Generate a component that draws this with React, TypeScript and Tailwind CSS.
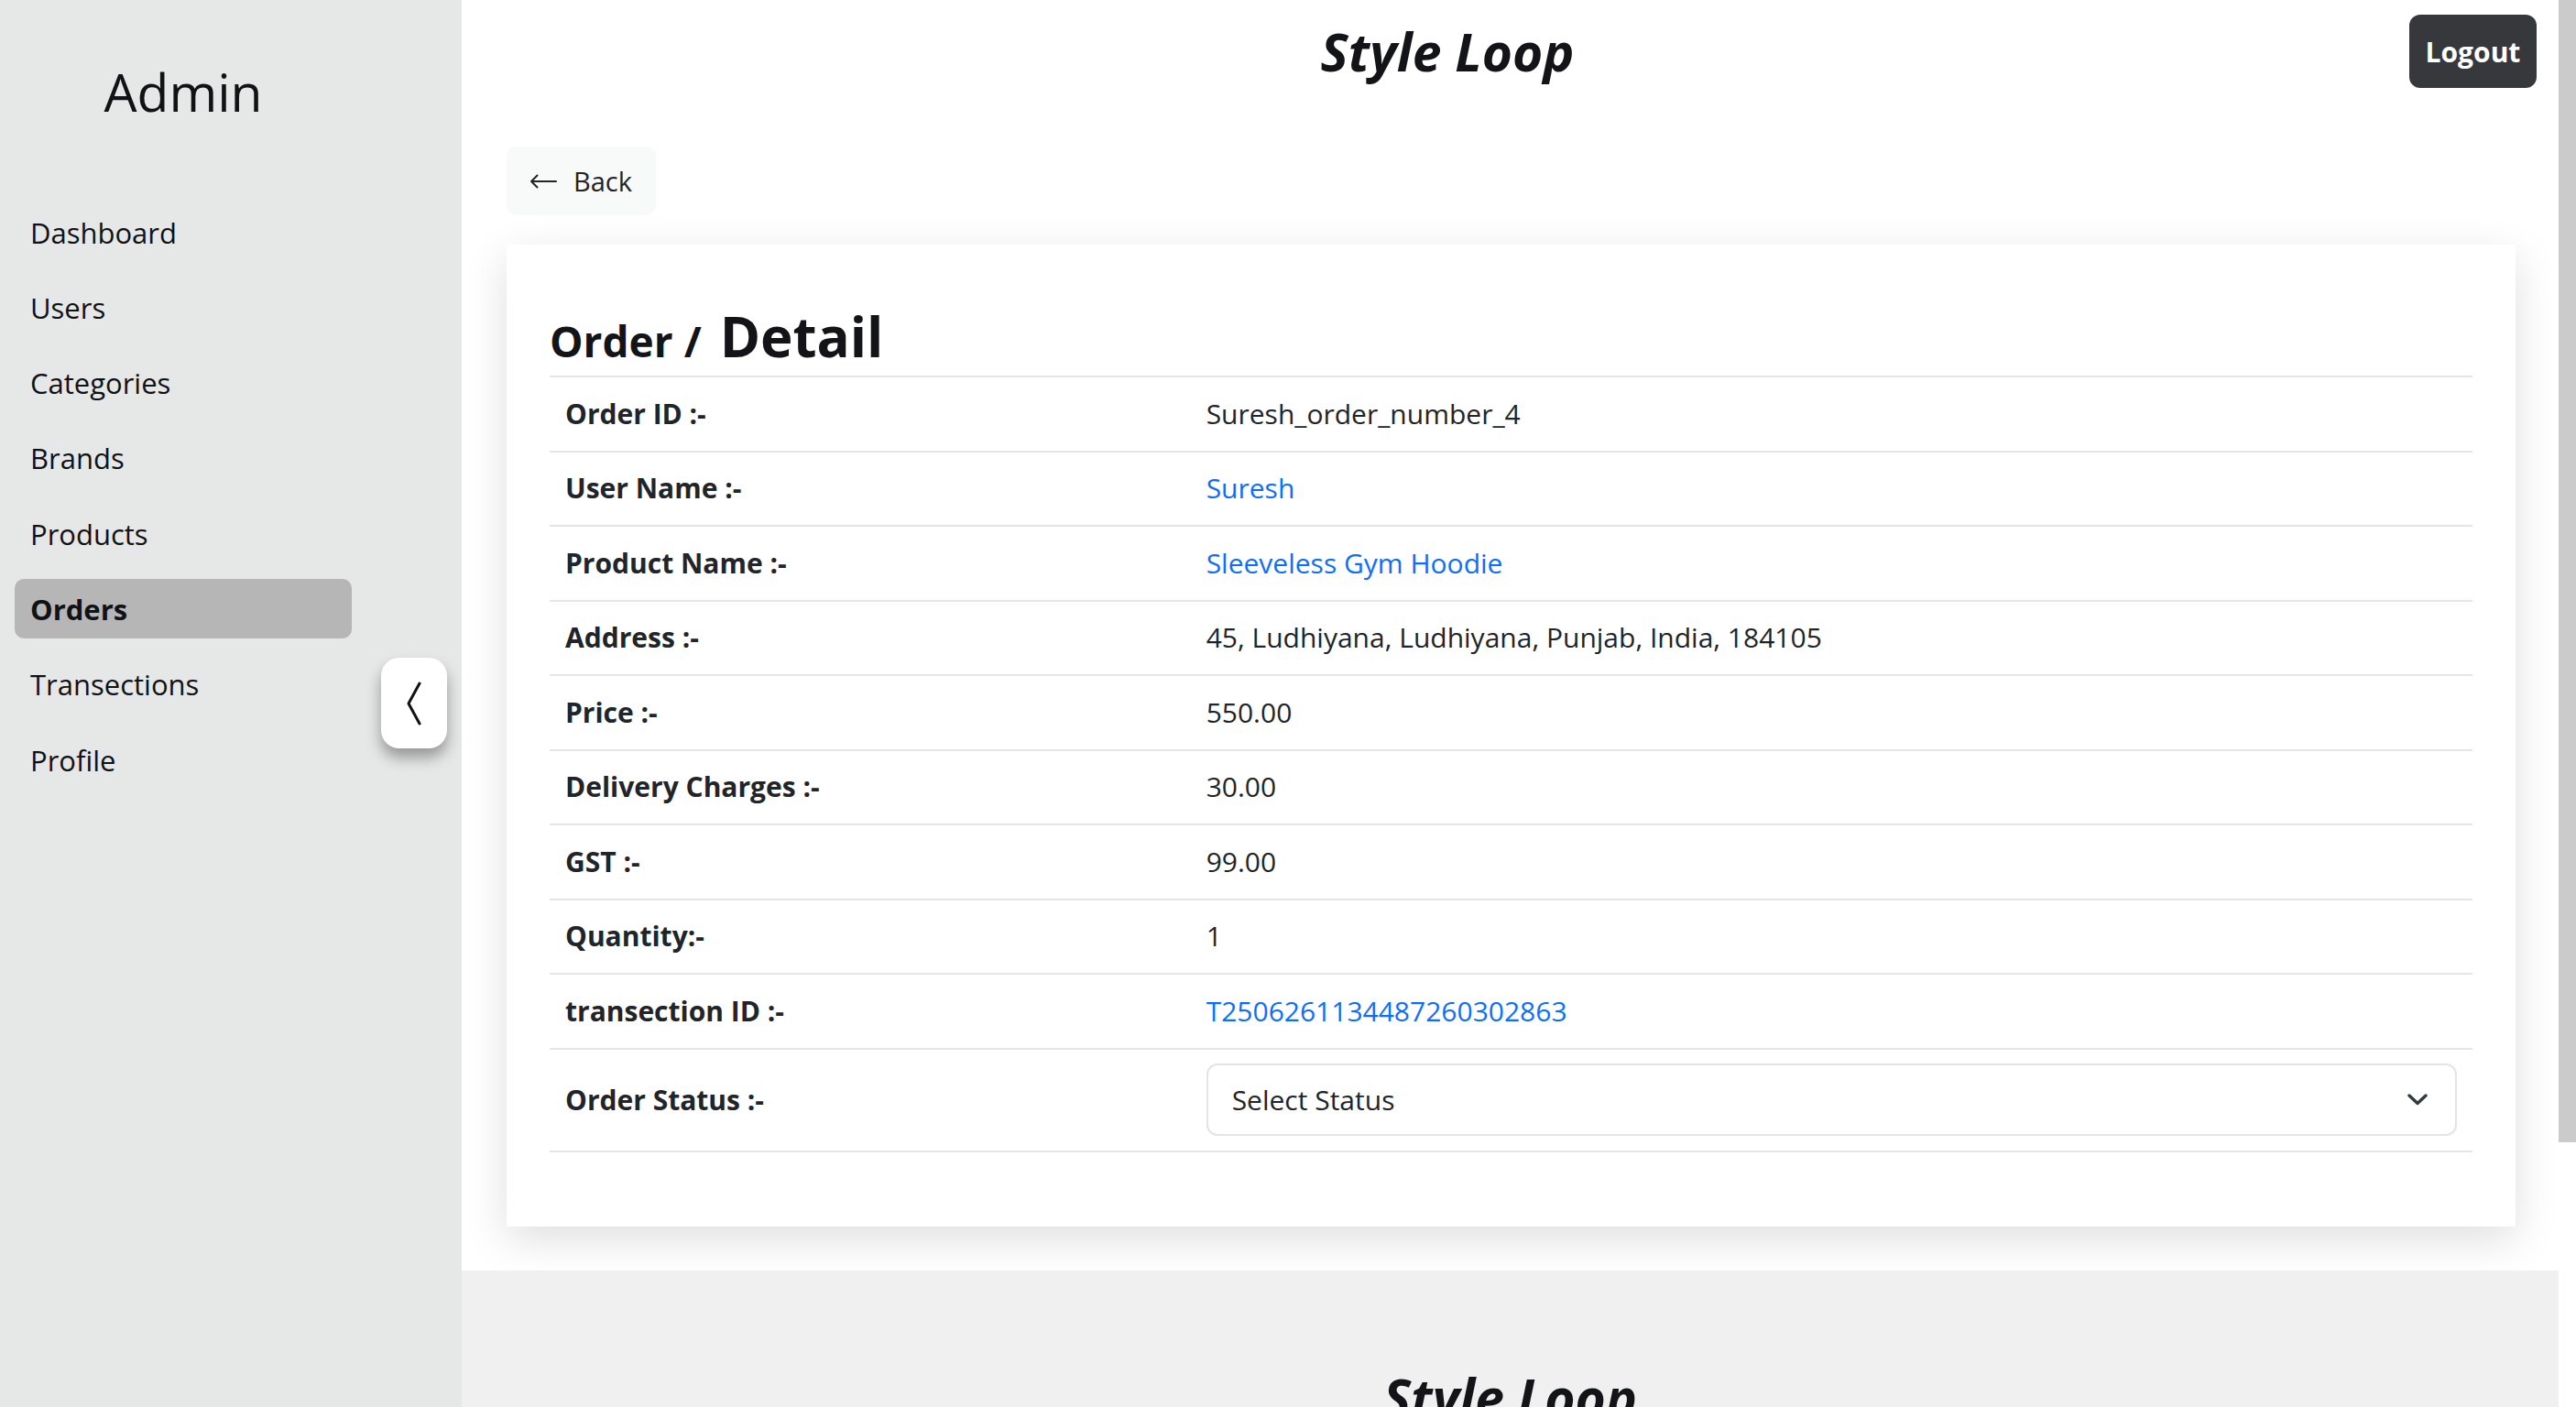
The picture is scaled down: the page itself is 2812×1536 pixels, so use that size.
import { useState } from 'react'

interface DetailRow {
  label: string
  value: string
  link?: boolean
}

const rows: DetailRow[] = [
  { label: 'Order ID :-', value: 'Suresh_order_number_4' },
  { label: 'User Name :-', value: 'Suresh', link: true },
  { label: 'Product Name :-', value: 'Sleeveless Gym Hoodie', link: true },
  { label: 'Address :-', value: '45, Ludhiyana, Ludhiyana, Punjab, India, 184105' },
  { label: 'Price :-', value: '550.00' },
  { label: 'Delivery Charges :-', value: '30.00' },
  { label: 'GST :-', value: '99.00' },
  { label: 'Quantity:-', value: '1' },
  { label: 'transection ID :-', value: 'T2506261134487260302863', link: true },
]

const navItems = ['Dashboard', 'Users', 'Categories', 'Brands', 'Products', 'Orders', 'Transections', 'Profile']

function Sidebar() {
  const active = 'Orders'
  return (
    <aside className="relative w-[504px] shrink-0 bg-[#e6e7e7] px-[16px] pt-[66px]">
      <div className="w-[368px] text-center text-[57px] leading-[68px] text-[#111216]">Admin</div>
      <nav className="mt-[87px] flex w-[368px] flex-col gap-[17.3px]">
        {navItems.map(item => (
          <a
            key={item}
            className={`flex h-[65px] items-center rounded-[10px] pl-[17px] text-[31px] leading-[40px] text-[#111216] ${
              item === active ? 'bg-[#b6b6b6] font-bold' : ''
            }`}
          >
            {item}
          </a>
        ))}
      </nav>
      {/* collapse toggle */}
      <button className="absolute left-[416px] top-[718px] flex h-[99px] w-[72px] items-center justify-center rounded-[20px] bg-white shadow-[0_10px_16px_rgba(0,0,0,0.35)]">
        <svg width="16" height="48" viewBox="0 0 16 48" fill="none">
          <polyline points="14,2 2,24 14,46" stroke="#111216" strokeWidth="3" strokeLinecap="round" strokeLinejoin="round" />
        </svg>
      </button>
    </aside>
  )
}

function StatusSelect() {
  const [status, setStatus] = useState('')
  return (
    <div className="relative h-[79px] w-full">
      <select
        value={status}
        onChange={e => setStatus(e.target.value)}
        className="h-full w-full appearance-none rounded-[12px] border-2 border-[#e2e4e6] bg-white pl-[26px] text-[30px] text-[#212529] outline-none"
      >
        <option value="">Select Status</option>
        <option value="pending">Pending</option>
        <option value="shipped">Shipped</option>
        <option value="delivered">Delivered</option>
      </select>
      <svg className="pointer-events-none absolute right-[32px] top-[33px]" width="22" height="13" viewBox="0 0 22 13" fill="none">
        <polyline points="2,2 11,10.5 20,2" stroke="#343a40" strokeWidth="3.4" strokeLinecap="round" strokeLinejoin="round" />
      </svg>
    </div>
  )
}

export default function App() {
  return (
    <div className="flex h-[1536px] w-full overflow-hidden bg-white font-['Open_Sans',sans-serif] text-[#212529]">
      <Sidebar />

      <main className="flex min-w-0 flex-1 flex-col">
        <header className="flex items-start pl-[26px] pr-[24px] pt-[16px]">
          <div className="flex-1 pt-[6px] text-center text-[57px] font-bold italic leading-[68px] text-[#131418]">Style Loop</div>
          <button className="flex h-[80px] w-[139px] items-center justify-center rounded-[12px] bg-[#37383b] text-[30px] font-bold text-white">
            Logout
          </button>
        </header>

        <section className="pb-[48px] pl-[49px] pr-[47px] pt-[64px]">
          <button className="flex h-[75px] items-center gap-[18px] rounded-[10px] bg-[#f8f9f9] pl-[25px] pr-[26px] text-[29px] text-[#212529]">
            <svg width="30" height="16" viewBox="0 0 30 16" fill="none">
              <path d="M29 8H2M8.5 1.5L2 8l6.5 6.5" stroke="#212529" strokeWidth="2" strokeLinecap="round" strokeLinejoin="round" />
            </svg>
            Back
          </button>

          <div className="mt-[32px] bg-white px-[47px] pb-[81px] pt-[66px] shadow-[0_14px_44px_rgba(0,0,0,0.13)]">
            <h2 className="mb-[4px] flex items-baseline font-bold leading-[68px] text-[#121418]">
              <span className="text-[46px]">Order /</span>
              <span className="ml-[20px] text-[60px]">Detail</span>
            </h2>

            <div className="border-b-2 border-[#e3e5e7]">
              {rows.map(row => (
                <div key={row.label} className="grid h-[81.5px] grid-cols-3 items-center border-t-2 border-[#e3e5e7] text-[30px] leading-[40px]">
                  <div className="px-[17px] font-bold">{row.label}</div>
                  <div className={`col-span-2 px-[17px] ${row.link ? 'text-[#0d6efd]' : ''}`}>{row.value}</div>
                </div>
              ))}
              <div className="grid h-[112.5px] grid-cols-3 items-center border-t-2 border-[#e3e5e7] text-[30px] leading-[40px]">
                <div className="px-[17px] font-bold">Order Status :-</div>
                <div className="col-span-2 px-[17px]">
                  <StatusSelect />
                </div>
              </div>
            </div>
          </div>
        </section>

        <footer className="flex-1 bg-[#f0f0f0] pt-[104px] text-center text-[57px] font-bold italic leading-[68px] text-[#131418]">
          Style Loop
        </footer>
      </main>

      {/* page scrollbar */}
      <div className="flex w-[19px] shrink-0 flex-col bg-white">
        <div className="h-[1247px] bg-[#cbcbcb]" />
      </div>
    </div>
  )
}
